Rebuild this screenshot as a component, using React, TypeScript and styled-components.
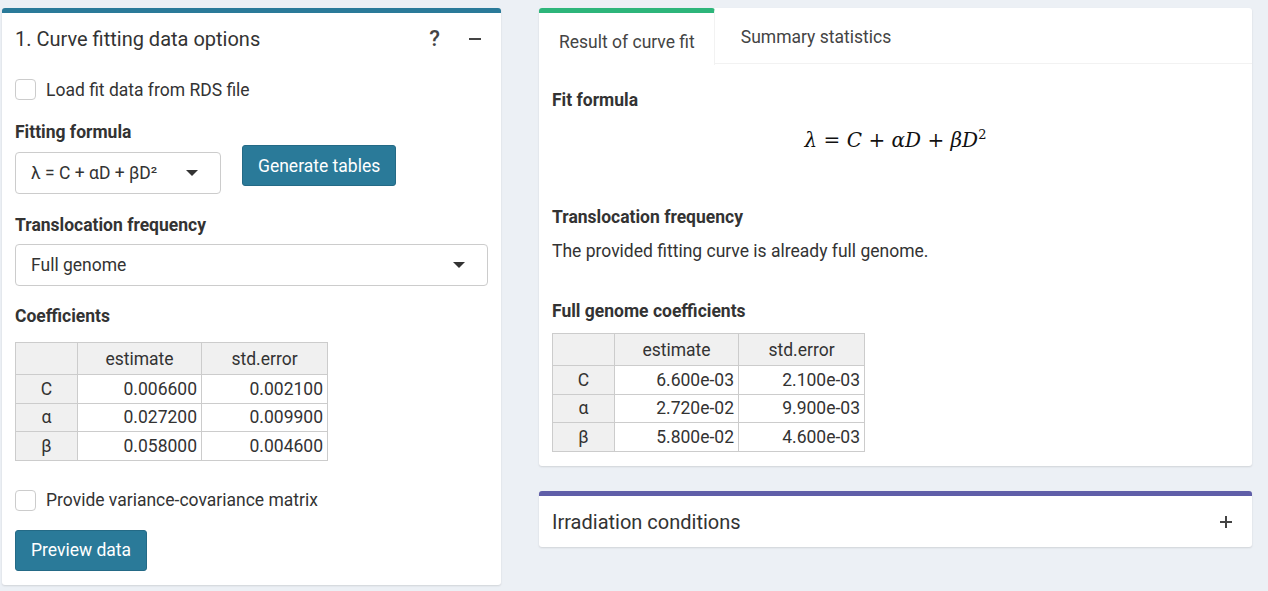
import React from "react";
import styled, { createGlobalStyle } from "styled-components";

const GlobalStyle = createGlobalStyle`
  html, body {
    margin: 0;
    padding: 0;
    background: #ecf0f5;
    font-family: Roboto, "Liberation Sans", sans-serif;
    color: #333;
  }
  * { box-sizing: border-box; }
`;

const Page = styled.div`
  display: flex;
  align-items: flex-start;
  gap: 38px;
  padding: 8px 0 0 2px;
  width: 1268px;
  height: 591px;
  overflow: hidden;
`;

const Column = styled.div<{ $width: number }>`
  width: ${(p) => p.$width}px;
  display: flex;
  flex-direction: column;
  gap: 25px;
`;

const Box = styled.div<{ $accent: string }>`
  background: #fff;
  border-top: 5px solid ${(p) => p.$accent};
  border-radius: 3px;
  box-shadow: 0 1px 2px rgba(0, 0, 0, 0.12);
`;

const BoxHeader = styled.div`
  display: flex;
  align-items: center;
  height: 51px;
  padding: 1px 20px 0 13px;
`;

const BoxTitle = styled.h3`
  flex: 1;
  margin: 0;
  font-size: 20px;
  font-weight: 400;
  color: #333;
`;

const HelpIcon = styled.span`
  font-size: 22px;
  font-weight: 500;
  color: #444;
  line-height: 1;
  margin-right: 29px;
`;

const Bar = styled.span<{ $vertical?: boolean }>`
  position: absolute;
  background: #444;
  ${(p) =>
    p.$vertical
      ? "left: 5px; top: 0; width: 2px; height: 12px;"
      : "left: 0; top: 5px; width: 12px; height: 2px;"}
`;

const SignIcon = styled.span`
  position: relative;
  width: 12px;
  height: 12px;
  display: inline-block;
`;

const BoxBody = styled.div`
  padding: 15px 13px 14px;
`;

const CheckRow = styled.label<{ $mt?: number }>`
  display: flex;
  align-items: center;
  gap: 10px;
  margin-top: ${(p) => p.$mt ?? 0}px;
  font-size: 17.5px;
  color: #333;
`;

const CheckSquare = styled.span`
  width: 21px;
  height: 21px;
  border: 1px solid #ccc;
  border-radius: 4px;
  background: #fff;
`;

const Label = styled.div<{ $mt?: number }>`
  font-size: 17.5px;
  font-weight: 700;
  margin-top: ${(p) => p.$mt ?? 0}px;
  color: #333;
  line-height: 20px;
`;

const FormRow = styled.div`
  display: flex;
  align-items: flex-start;
  gap: 21px;
  margin-top: 3px;
`;

const Select = styled.div<{ $width?: number; $mt?: number }>`
  width: ${(p) => (p.$width ? `${p.$width}px` : "100%")};
  height: 42px;
  border: 1px solid #ccc;
  border-radius: 4px;
  display: flex;
  align-items: center;
  justify-content: space-between;
  padding: 0 22px 0 15px;
  font-size: 17.5px;
  color: #333;
  margin-top: ${(p) => p.$mt ?? 0}px;
`;

const Caret = styled.span`
  width: 0;
  height: 0;
  border-left: 6px solid transparent;
  border-right: 6px solid transparent;
  border-top: 6px solid #333;
`;

const Button = styled.button<{ $mt?: number }>`
  height: 41px;
  padding: 0 15px;
  background: #2a7a99;
  border: 1px solid #246a86;
  border-radius: 3px;
  color: #fff;
  font-family: Roboto, "Liberation Sans", sans-serif;
  font-size: 17.5px;
  margin-top: ${(p) => p.$mt ?? 0}px;
`;

const Table = styled.table<{ $mt?: number }>`
  border-collapse: collapse;
  margin-top: ${(p) => p.$mt ?? 0}px;
  font-size: 17.5px;
  color: #333;
`;

const Th = styled.th<{ $w: number }>`
  width: ${(p) => p.$w}px;
  height: 32px;
  border: 1px solid #ccc;
  background: #f0f0f0;
  font-weight: 400;
  text-align: center;
  padding: 0 5px;
`;

const RowHead = styled.td`
  height: 28.5px;
  border: 1px solid #ccc;
  background: #f0f0f0;
  text-align: center;
  padding: 0 5px;
`;

const Td = styled.td`
  height: 28.5px;
  border: 1px solid #ccc;
  text-align: right;
  padding: 0 4px;
`;

const Tabs = styled.div`
  display: flex;
  height: 56px;
  border-bottom: 1px solid #f2f2f2;
  margin-top: -5px;
`;

const Tab = styled.div<{ $active?: boolean }>`
  display: flex;
  align-items: center;
  font-size: 17.5px;
  color: #444;
  padding: ${(p) => (p.$active ? "5px 19px 0 20px" : "3px 26px 0")};
  background: #fff;
  border-top: ${(p) => (p.$active ? "5px solid #2db57a" : "0")};
  border-right: ${(p) => (p.$active ? "1px solid #f2f2f2" : "0")};
  border-radius: ${(p) => (p.$active ? "3px 3px 0 0" : "0")};
  margin-bottom: ${(p) => (p.$active ? "-1px" : "0")};
  height: ${(p) => (p.$active ? "57px" : "auto")};
`;

const TabBody = styled.div`
  padding: 26px 13px 14px;
`;

const Paragraph = styled.p<{ $mt?: number }>`
  margin: ${(p) => p.$mt ?? 0}px 0 0;
  font-size: 17.5px;
  line-height: 20px;
  color: #333;
`;

const MathLine = styled.div`
  text-align: center;
  font-family: "DejaVu Serif", "Liberation Serif", serif;
  font-size: 20px;
  margin-top: 17px;
  height: 24px;
  color: #111;
  i { font-style: italic; }
  sup { font-size: 13px; }
`;

type Row = [string, string, string];

const CoefTable: React.FC<{ rows: Row[]; mt: number }> = ({ rows, mt }) => (
  <Table $mt={mt}>
    <thead>
      <tr>
        <Th $w={62} />
        <Th $w={124}>estimate</Th>
        <Th $w={126}>std.error</Th>
      </tr>
    </thead>
    <tbody>
      {rows.map((r) => (
        <tr key={r[0]}>
          <RowHead>{r[0]}</RowHead>
          <Td>{r[1]}</Td>
          <Td>{r[2]}</Td>
        </tr>
      ))}
    </tbody>
  </Table>
);

const leftRows: Row[] = [
  ["C", "0.006600", "0.002100"],
  ["α", "0.027200", "0.009900"],
  ["β", "0.058000", "0.004600"],
];

const rightRows: Row[] = [
  ["C", "6.600e-03", "2.100e-03"],
  ["α", "2.720e-02", "9.900e-03"],
  ["β", "5.800e-02", "4.600e-03"],
];

const App: React.FC = () => (
  <>
    <GlobalStyle />
    <Page>
      <Column $width={499}>
        <Box $accent="#2a7a99">
          <BoxHeader>
            <BoxTitle>1. Curve fitting data options</BoxTitle>
            <HelpIcon>?</HelpIcon>
            <SignIcon>
              <Bar />
            </SignIcon>
          </BoxHeader>
          <BoxBody>
            <CheckRow>
              <CheckSquare />
              Load fit data from RDS file
            </CheckRow>
            <Label $mt={22}>Fitting formula</Label>
            <FormRow>
              <Select $width={206} $mt={7}>
                <span>λ = C + αD + βD²</span>
                <Caret />
              </Select>
              <Button>Generate tables</Button>
            </FormRow>
            <Label $mt={21}>Translocation frequency</Label>
            <Select $mt={9}>
              <span>Full genome</span>
              <Caret />
            </Select>
            <Label $mt={20}>Coefficients</Label>
            <CoefTable rows={leftRows} mt={16} />
            <CheckRow $mt={29}>
              <CheckSquare />
              Provide variance-covariance matrix
            </CheckRow>
            <Button $mt={19}>Preview data</Button>
          </BoxBody>
        </Box>
      </Column>
      <Column $width={713}>
        <Box $accent="transparent">
          <Tabs>
            <Tab $active>Result of curve fit</Tab>
            <Tab>Summary statistics</Tab>
          </Tabs>
          <TabBody>
            <Label>Fit formula</Label>
            <MathLine>
              <i>λ</i> = <i>C</i> + <i>αD</i> + <i>βD</i>
              <sup>2</sup>
            </MathLine>
            <Label $mt={56}>Translocation frequency</Label>
            <Paragraph $mt={14}>The provided fitting curve is already full genome.</Paragraph>
            <Label $mt={40}>Full genome coefficients</Label>
            <CoefTable rows={rightRows} mt={12} />
          </TabBody>
        </Box>
        <Box $accent="#5f5ea8">
          <BoxHeader>
            <BoxTitle>Irradiation conditions</BoxTitle>
            <SignIcon>
              <Bar />
              <Bar $vertical />
            </SignIcon>
          </BoxHeader>
        </Box>
      </Column>
    </Page>
  </>
);

export default App;
